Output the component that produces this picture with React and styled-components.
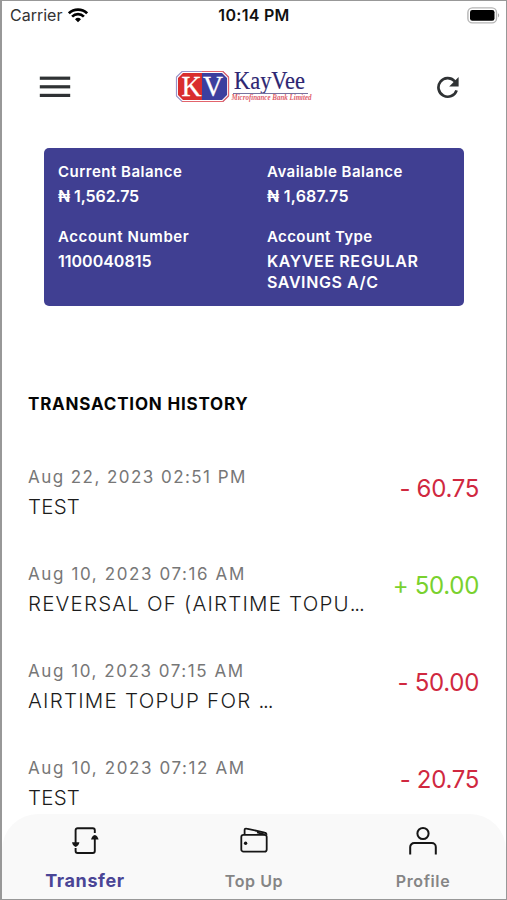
import styled, { createGlobalStyle } from 'styled-components'

const GlobalStyle=createGlobalStyle`
 *{
  box-sizing:border-box;
 }
 body{
  margin:0;
  background-color:white;
  font-family:Inter, "Open Sans", sans-serif;
 }
`
const Screen=styled.div`
 width:507px;
 height:900px;
 display:flex;
 flex-direction:column;
 overflow:hidden;
 background-color:white;
 border:1px solid #989898;
 border-left-width:2px;
`
const StatusBar=styled.div`
 height:28px;
 flex:none;
 display:grid;
 grid-template-columns:1fr auto 1fr;
 align-items:center;
 padding:0 6px 0 8px;
 font-size:16px;
 color:#111;
`
const Carrier=styled.div`
 display:flex;
 align-items:center;
 gap:6px;
 color:#333;
`
const Time=styled.div`
 font-weight:600;
 margin-left:-2px;
 letter-spacing:0.3px;
`
const Battery=styled.svg`
 justify-self:end;
`
const Header=styled.div`
 height:119px;
 flex:none;
 display:grid;
 grid-template-columns:136px 1fr auto;
 align-items:center;
 padding:0 47px 3px 37px;
`
const Logo=styled.svg`
 display:block;
`
const Card=styled.div`
 height:158px;
 flex:none;
 margin:0 42px;
 padding:12px 14px;
 border-radius:5px;
 background-color:#403f92;
 color:white;
 font-weight:600;
 display:grid;
 grid-template-columns:209px 1fr;
 grid-template-rows:65px auto;
`
const Label=styled.div`
 font-size:15px;
 line-height:23px;
 white-space:nowrap;
 letter-spacing:${props=>props.$spacing};
`
const Value=styled.div`
 margin-top:3px;
 font-size:16px;
 line-height:20.5px;
 letter-spacing:${props=>props.$spacing};
`
const History=styled.div`
 flex:1;
 min-height:0;
 padding:86px 27px 0 26px;
`
const Title=styled.h2`
 margin:0 0 49px;
 font-size:17px;
 line-height:24px;
 font-weight:700;
 color:#050505;
 letter-spacing:0.8px;
`
const Row=styled.div`
 height:97px;
 display:flex;
 justify-content:space-between;
`
const Info=styled.div`
 white-space:nowrap;
`
const DateText=styled.div`
 font-size:17px;
 line-height:24px;
 color:#777;
 letter-spacing:${props=>props.$spacing};
`
const Desc=styled.div`
 margin-top:4px;
 font-size:20.5px;
 line-height:28px;
 font-weight:300;
 color:#1c1c1c;
 letter-spacing:${props=>props.$spacing};
`
const Dots=styled.span`
 letter-spacing:-1.2px;
`
const Amount=styled.div`
 padding-top:8px;
 font-size:24px;
 line-height:32px;
 white-space:nowrap;
 letter-spacing:-0.3px;
 color:${props=>props.$credit ? "#79d12e" : "#d0283f"};
`
const TabBar=styled.div`
 height:85px;
 flex:none;
 display:grid;
 grid-template-columns:166px 1fr 166px;
 border-radius:36px 36px 0 0;
 background-color:#f9f9f9;
`
const Tab=styled.div`
 display:flex;
 flex-direction:column;
 align-items:center;
 padding-top:11px;
`
const TabLabel=styled.div`
 margin-top:12px;
 line-height:24px;
 font-size:${props=>props.$active ? "18px" : "16px"};
 font-weight:${props=>props.$active ? 700 : 600};
 color:${props=>props.$active ? "#4a4596" : "#858585"};
 letter-spacing:0.6px;
`

const accounts=[
  { label:"Current Balance", value:"₦ 1,562.75", ls:"0.5px", vs:"-0.1px" },
  { label:"Available Balance", value:"₦ 1,687.75", ls:"0.5px", vs:"0.25px" },
  { label:"Account Number", value:"1100040815", ls:"0.6px", vs:"0" },
  { label:"Account Type", value:"KAYVEE REGULAR SAVINGS A/C", ls:"0.4px", vs:"0.6px" },
]

const transactions=[
  { date:"Aug 22, 2023 02:51 PM", desc:"TEST", amount:"- 60.75", ds:"1.45px", ts:"0.2px" },
  { date:"Aug 10, 2023 07:16 AM", desc:"REVERSAL OF (AIRTIME TOPU", cut:true, amount:"+ 50.00", credit:true, ds:"1.6px", ts:"1.2px" },
  { date:"Aug 10, 2023 07:15 AM", desc:"AIRTIME TOPUP FOR ", cut:true, amount:"- 50.00", ds:"1.55px", ts:"1.25px" },
  { date:"Aug 10, 2023 07:12 AM", desc:"TEST", amount:"- 20.75", ds:"1.6px", ts:"0.2px" },
]

const WifiIcon = () => (
  <svg width="20" height="15" viewBox="0 0 20 15" fill="none" stroke="#000" strokeWidth="2.7">
    <path d="M0.9 5.3a13 13 0 0 1 18.2 0" />
    <path d="M4.1 8.6a8.4 8.4 0 0 1 11.8 0" />
    <path d="M10 14.3l-3-3a4.3 4.3 0 0 1 6 0z" fill="#000" stroke="none" />
  </svg>
)

const BatteryIcon = () => (
  <Battery width="33" height="17" viewBox="0 0 33 17">
    <rect x="0.9" y="0.9" width="28.6" height="15" rx="4.5" fill="none" stroke="#b5b5b5" strokeWidth="1.4" />
    <rect x="3" y="3" width="24.5" height="10.8" rx="2.3" fill="#000" />
    <path d="M31 6.2c1.6.7 1.6 3.5 0 4.2z" fill="#aaa" />
  </Battery>
)

const MenuIcon = () => (
  <svg width="32" height="22" viewBox="0 0 32 22" fill="#2f3234">
    <rect x="0.8" y="0.6" width="30.4" height="3.2" />
    <rect x="0.8" y="9.2" width="30.4" height="3.2" />
    <rect x="0.8" y="17.8" width="30.4" height="3.2" />
  </svg>
)

const RefreshIcon = () => (
  <svg width="23" height="23" viewBox="0 0 23 23">
    <path d="M20.6 14.3a9.3 9.3 0 1 1-2-9.2l1.3 1.4" fill="none" stroke="#2f3234" strokeWidth="2.7" />
    <path d="M22.6 1v9.4h-9.4z" fill="#2f3234" />
  </svg>
)

const KayVeeLogo = () => (
  <Logo width="150" height="48" viewBox="0 -6 150 48" fontFamily="Liberation Serif, serif">
    <path d="M7 2.5h41l5.5 5.5v19l-5.5 5.5H7L1.5 27V8z" fill="#fff" stroke="#9a94ca" strokeWidth="1.2" />
    <path d="M8 4h19v27H8L3 26V9z" fill="#d92d2d" />
    <path d="M27 4h20l5 5v17l-5 5H27z" fill="#3c3f9e" />
    <path d="M27 2.5h21l5.5 5.5v19l-5.5 5.5H7" fill="none" stroke="#e2646c" strokeWidth="1.2" />
    <text x="6.5" y="27" fontSize="29" fill="#fff" stroke="#fff" strokeWidth="0.3" textLength="20" lengthAdjust="spacingAndGlyphs">K</text>
    <text x="28" y="27" fontSize="29" fill="#fff" stroke="#fff" strokeWidth="0.3" textLength="20" lengthAdjust="spacingAndGlyphs">V</text>
    <text x="59" y="19.5" fontSize="26" fill="#2d2672" stroke="#2d2672" strokeWidth="0.2" textLength="71" lengthAdjust="spacingAndGlyphs">KayVee</text>
    <path d="M58 24.5h75" stroke="#77739f" strokeWidth="1" />
    <text x="56.5" y="31" fontSize="7.5" fontWeight="700" fontStyle="italic" fill="#e0606b" textLength="80" lengthAdjust="spacingAndGlyphs">Microfinance Bank Limited</text>
  </Logo>
)

const TransferIcon = () => (
  <svg width="28" height="32" viewBox="0 0 28 32" fill="none" stroke="#161616" strokeWidth="1.9">
    <path d="M23.8 8V5.2a2 2 0 0 0-2-2H6.6a2 2 0 0 0-2 2v13" />
    <path d="M4.6 23v3a2 2 0 0 0 2 2h15.2a2 2 0 0 0 2-2V13" />
    <path d="M1 17.3h7.4q-.8 3.8-3.7 4.6Q1.8 21.1 1 17.3z" fill="#161616" stroke="none" />
    <path d="M20 14.5h7.6q-.9-3.8-3.8-4.6-2.9.8-3.8 4.6z" fill="#161616" stroke="none" />
  </svg>
)

const WalletIcon = () => (
  <svg width="28" height="32" viewBox="0 0 28 32" fill="none" stroke="#161616" strokeWidth="1.8" strokeLinejoin="round">
    <rect x="1.3" y="9.8" width="25.4" height="16.8" rx="2.2" />
    <path d="M4.6 9.8V5a1.500 1.500 0 0 1 1.900-1.400l18.200 4a2 2 0 0 1 1.700 2.300" />
    <path d="M17 7.400l8 2.200" />
    <circle cx="5.600" cy="18.200" r="1.700" fill="#161616" stroke="none" />
  </svg>
)

const ProfileIcon = () => (
  <svg width="28" height="32" viewBox="0 0 28 32" fill="none" stroke="#161616" strokeWidth="2">
    <circle cx="14" cy="8.5" r="5.6" />
    <path d="M1.2 29.5V22a4 4 0 0 1 4-4h17.600a4 4 0 0 1 4 4v7.500" />
  </svg>
)

const App = () => {
  return (
    <Screen>
      <GlobalStyle />
      <StatusBar>
        <Carrier>Carrier <WifiIcon /></Carrier>
        <Time>10:14 PM</Time>
        <BatteryIcon />
      </StatusBar>
      <Header>
        <MenuIcon />
        <KayVeeLogo />
        <RefreshIcon />
      </Header>
      <Card>
        {accounts.map(item => (
          <div key={item.label}>
            <Label $spacing={item.ls}>{item.label}</Label>
            <Value $spacing={item.vs}>{item.value}</Value>
          </div>
        ))}
      </Card>
      <History>
        <Title>TRANSACTION HISTORY</Title>
        {transactions.map(item => (
          <Row key={item.date}>
            <Info>
              <DateText $spacing={item.ds}>{item.date}</DateText>
              <Desc $spacing={item.ts}>{item.desc}{item.cut && <Dots>...</Dots>}</Desc>
            </Info>
            <Amount $credit={item.credit}>{item.amount}</Amount>
          </Row>
        ))}
      </History>
      <TabBar>
        <Tab>
          <TransferIcon />
          <TabLabel $active>Transfer</TabLabel>
        </Tab>
        <Tab>
          <WalletIcon />
          <TabLabel>Top Up</TabLabel>
        </Tab>
        <Tab>
          <ProfileIcon />
          <TabLabel>Profile</TabLabel>
        </Tab>
      </TabBar>
    </Screen>
  )
}

export default App
